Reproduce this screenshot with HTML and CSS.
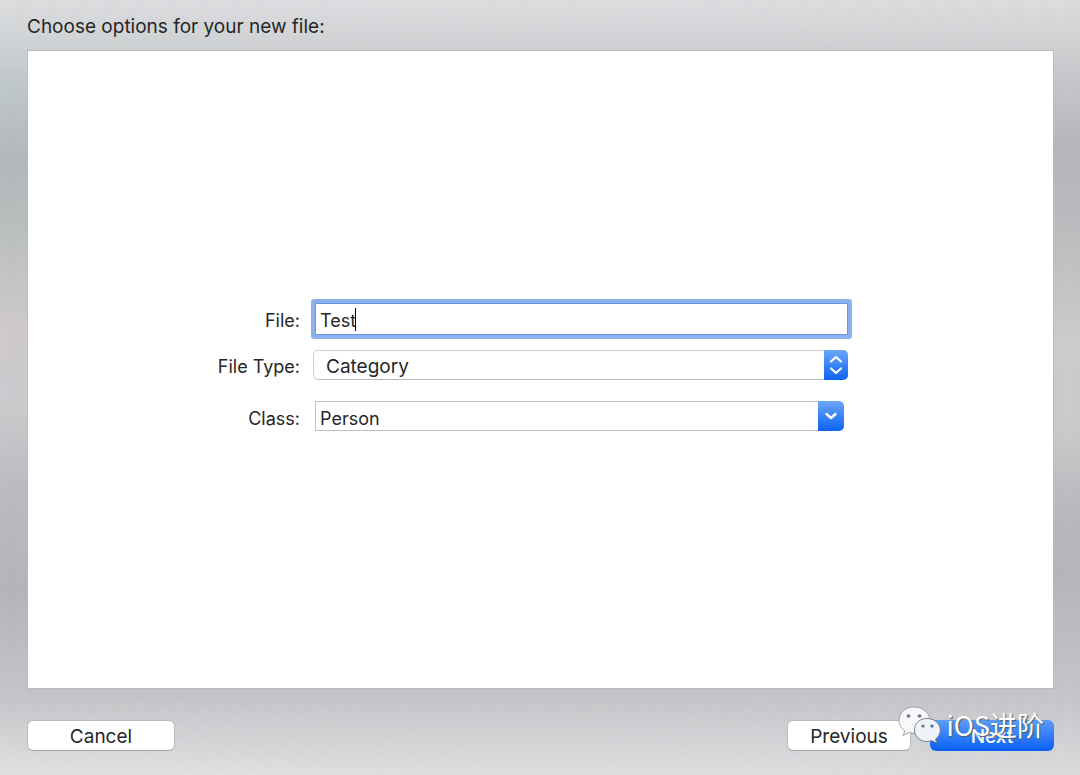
FILE: index.html
```html
<!DOCTYPE html>
<html lang="en">
<head>
<meta charset="utf-8">
<title>New File</title>
<link rel="stylesheet" href="styles.css">
</head>
<body>
<form class="sheet">
  <h1 class="title">Choose options for your new file:</h1>
  <main class="panel">
    <div class="fields">
      <label class="label" for="file">File:</label>
      <div class="text-field">
        <input class="input" id="file" type="text" value="Test">
        <span class="caret"></span>
      </div>
      <label class="label" for="type">File Type:</label>
      <div class="popup">
        <select class="popup-select" id="type"><option>Category</option></select>
        <svg class="popup-arrows" viewBox="0 0 24 30" fill="none" stroke="#fff" stroke-width="2.200" stroke-linecap="round" stroke-linejoin="round"><path d="M7 11.500 12 7l5 4.500M7 18.500l5 4.500 5-4.500"/></svg>
      </div>
      <label class="label label-spaced" for="class">Class:</label>
      <div class="combo">
        <input class="combo-input" id="class" type="text" value="Person">
        <button class="combo-button" type="button" aria-label="Show classes"><svg class="combo-arrow" viewBox="0 0 26 30" fill="none" stroke="#fff" stroke-width="2.400" stroke-linecap="round" stroke-linejoin="round"><path d="M8.500 13l4.500 4 4.500-4"/></svg></button>
      </div>
    </div>
  </main>
  <footer class="actions">
    <button class="button cancel" type="button">Cancel</button>
    <button class="button" type="button">Previous</button>
    <button class="button primary" type="submit">Next</button>
    <div class="watermark">
      <svg class="wechat" viewBox="0 0 44 38">
        <path d="M16 1C7 1 1 7 1 14.500c0 4.500 2.300 8 6 10.500l-2 4.500 6-3c2 .7 4 .8 6 .8 8.500 0 15-5.500 15-12.800S25 1 16 1Z" fill="#f7f8f9" stroke="#8c8f94" stroke-width=".8"/>
        <ellipse cx="10.500" cy="10" rx="2" ry="1.800" fill="#777b80"/><ellipse cx="21.500" cy="10" rx="2" ry="1.800" fill="#777b80"/>
        <path d="M29 12.500c-7.500 0-12.500 5-12.500 11.300S21.500 35.500 29 35.500c2 0 3.500-.3 5-.8l5 2.300-1.500-4c3-2.200 4.800-5 4.800-9 0-6.500-5.800-11.500-13.300-11.500Z" fill="#eef3f9" stroke="#6f747b" stroke-width=".9"/>
        <ellipse cx="25" cy="20" rx="1.700" ry="1.500" fill="#6e7883"/><ellipse cx="34" cy="20" rx="1.700" ry="1.500" fill="#3f6fae"/>
      </svg>
      <span class="watermark-text">iOS进阶</span>
    </div>
  </footer>
</form>
</body>
</html>
```
FILE: styles.css
```css
* {
  box-sizing: border-box;
}

body {
  margin: 0;
  min-height: 100vh;
  display: flex;
  position: relative;
  font-family: Inter, "Noto Sans CJK SC", sans-serif;
  font-size: 18px;
  color: #262626;
  background: linear-gradient(#dbdddf 0%, #ced1d3 6%, #bfc7c9 11%, #b3b7bb 21%, #b7bebd 28%, #c2c2c4 34%, #cec9cd 43%, #cacacd 53%, #bbbbc0 63%, #b4b5ba 76%, #c4c5c8 90%, #e0e1e2 100%);
}

body::before {
  content: "";
  position: absolute;
  inset: 0;
  background: linear-gradient(#dcdcde 0%, #cfcfd2 6%, #b4b5b9 19%, #b8b9bc 27%, #cbcbca 44%, #cacaca 55%, #b7b8bd 66%, #b4b5ba 74%, #c4c5c8 90%, #dadbdd 100%);
  -webkit-mask-image: linear-gradient(to right, transparent, #000);
  mask-image: linear-gradient(to right, transparent, #000);
}

.sheet {
  position: relative;
  flex: 1;
  display: flex;
  flex-direction: column;
  padding: 15px 26px 24px 27px;
}

.title {
  margin: 0 0 11px;
  font-size: 19px;
  font-weight: 400;
  line-height: 24px;
}

.panel {
  flex: 1;
  display: flex;
  align-items: center;
  padding: 0 205px 5px 188px;
  background: #fff;
  border: 1px solid #b9babc;
}

.fields {
  flex: 1;
  display: grid;
  grid-template-columns: 84px 1fr;
  column-gap: 13px;
  row-gap: 15px;
  align-items: center;
}

.label {
  text-align: right;
  white-space: nowrap;
  line-height: 24px;
  padding-top: 3px;
}

.text-field {
  position: relative;
  margin-left: 2px;
}

.input,
.combo-input {
  width: 100%;
  height: 32px;
  margin: 0;
  padding: 2px 4px 0;
  border: 1px solid #6a97dc;
  font: inherit;
  color: inherit;
  background: #fff;
  display: block;
  outline: none;
}

.input {
  box-shadow: 0 0 0 4px #8db1ee;
  border-radius: 1px;
}

.caret {
  position: absolute;
  left: 40px;
  top: 5px;
  width: 1px;
  height: 23px;
  background: #000;
}

.popup {
  position: relative;
  height: 30px;
}

.popup-select {
  appearance: none;
  width: 100%;
  height: 30px;
  margin: 0;
  padding: 2px 30px 0 12px;
  border: 1px solid #cfcfcf;
  border-bottom-color: #b8b8b8;
  border-radius: 5px;
  background: #fff;
  font: inherit;
  font-size: 19px;
  color: inherit;
}

.popup-arrows {
  position: absolute;
  top: 0;
  right: 0;
  width: 24px;
  height: 30px;
  border-radius: 0 5px 5px 0;
  background: linear-gradient(#6ba6f8, #0d63f5);
  pointer-events: none;
}

.combo {
  display: flex;
  margin: 6px 4px 0 2px;
}

.label-spaced {
  margin-top: 8px;
}

.combo-input {
  flex: 1;
  min-width: 0;
  height: 30px;
  padding-top: 4px;
  border: 1px solid #bfbfbf;
  border-right: 0;
}

.combo-button {
  width: 26px;
  height: 30px;
  padding: 0;
  border: 0;
  border-radius: 0 5px 5px 0;
  background: linear-gradient(#6ba6f8, #0d63f5);
}

.combo-arrow {
  display: block;
  width: 26px;
  height: 30px;
}

.actions {
  position: relative;
  display: flex;
  gap: 19px;
  margin-top: 31px;
}

.button {
  width: 124px;
  height: 31px;
  padding: 2px 0 0;
  border: 1px solid #b9babc;
  border-bottom-color: #a5a6a8;
  border-radius: 6px;
  background: #fff;
  font: inherit;
  font-size: 19px;
  line-height: 24px;
  color: #262626;
}

.cancel {
  width: 148px;
  margin-right: auto;
}

.primary {
  border: 0;
  font-weight: 500;
  color: #fff;
  background: linear-gradient(#5a9cf7, #0a60f5);
}

.watermark {
  position: absolute;
  right: 10px;
  bottom: 7px;
  display: flex;
  align-items: center;
  gap: 4px;
  pointer-events: none;
}

.wechat {
  width: 44px;
  height: 38px;
}

.watermark-text {
  font-family: "Noto Sans CJK SC", sans-serif;
  font-size: 27px;
  line-height: 32px;
  font-weight: 400;
  color: #fff;
  white-space: nowrap;
  text-shadow: 1px 1px 1px #55585d;
}
```
